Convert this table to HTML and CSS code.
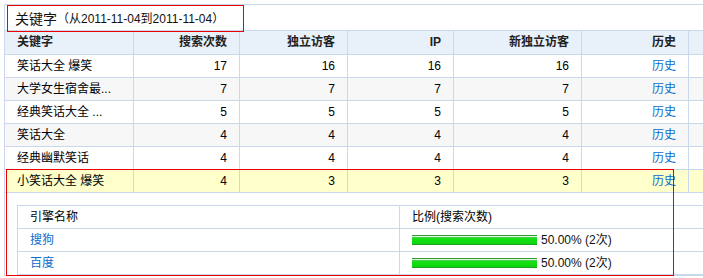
FILE: index.html
```html
<!DOCTYPE html>
<html lang="zh-CN">
<head>
<meta charset="utf-8">
<title>关键字</title>
<link rel="stylesheet" href="styles.css">
</head>
<body>
<div class="panel">
  <div class="title"><span class="title-main">关键字</span><span class="title-range">（从2011-11-04到2011-11-04）</span></div>
  <table class="grid">
    <colgroup>
      <col class="c1"><col class="c2"><col class="c3"><col class="c4"><col class="c5"><col class="c6"><col class="c7">
    </colgroup>
    <thead>
      <tr><th class="left">关键字</th><th>搜索次数</th><th>独立访客</th><th>IP</th><th>新独立访客</th><th>历史</th><th class="tail"></th></tr>
    </thead>
    <tbody>
      <tr><td class="left">笑话大全 爆笑</td><td>17</td><td>16</td><td>16</td><td>16</td><td><a href="#">历史</a></td><td class="tail"></td></tr>
      <tr class="alt"><td class="left">大学女生宿舍最...</td><td>7</td><td>7</td><td>7</td><td>7</td><td><a href="#">历史</a></td><td class="tail"></td></tr>
      <tr><td class="left">经典笑话大全 ...</td><td>5</td><td>5</td><td>5</td><td>5</td><td><a href="#">历史</a></td><td class="tail"></td></tr>
      <tr class="alt"><td class="left">笑话大全</td><td>4</td><td>4</td><td>4</td><td>4</td><td><a href="#">历史</a></td><td class="tail"></td></tr>
      <tr><td class="left">经典幽默笑话</td><td>4</td><td>4</td><td>4</td><td>4</td><td><a href="#">历史</a></td><td class="tail"></td></tr>
      <tr class="sel"><td class="left">小笑话大全 爆笑</td><td>4</td><td>3</td><td>3</td><td>3</td><td><a href="#">历史</a></td><td class="tail"></td></tr>
      <tr class="detail">
        <td colspan="7">
          <table class="engines">
            <colgroup><col class="e1"><col class="e2"></colgroup>
            <tr><td>引擎名称</td><td class="ratio">比例(搜索次数)</td></tr>
            <tr><td><a href="#">搜狗</a></td><td class="ratio"><span class="bar" style="width:125px"></span><span class="pct">50.00% (2次)</span></td></tr>
            <tr><td><a href="#">百度</a></td><td class="ratio"><span class="bar" style="width:125px"></span><span class="pct">50.00% (2次)</span></td></tr>
          </table>
        </td>
      </tr>
    </tbody>
  </table>
  <div class="hl hl-title"></div>
  <div class="hl hl-row"></div>
</div>
</body>
</html>
```
FILE: styles.css
```css
html, body {
  margin: 0;
  padding: 0;
  background: #fff;
  overflow: hidden;
}
body {
  font-family: "Liberation Sans", "Noto Sans CJK SC", sans-serif;
  font-size: 12px;
  color: #000;
}
a {
  color: #0a6ccc;
  text-decoration: none;
}
.panel {
  position: relative;
  margin: 4px 0 0 4px;
  width: 698px;
  overflow: hidden;
  border-left: 1px solid #cad8ec;
  border-top: 1px solid #cad8ec;
}
.title {
  height: 25px;
  display: flex;
  align-items: center;
  padding-left: 10px;
  color: #111;
}
.title-main {
  font-size: 14px;
}
.title-range {
  font-size: 12px;
}
.grid {
  border-collapse: separate;
  border-spacing: 0;
  table-layout: fixed;
  width: 698px;
}
.grid .c1 { width: 129px; }
.grid .c2 { width: 106px; }
.grid .c3 { width: 108px; }
.grid .c4 { width: 106px; }
.grid .c5 { width: 128px; }
.grid .c6 { width: 107px; }
.grid .c7 { width: 14px; }
.grid th,
.grid td {
  border-right: 1px solid #cad8ec;
  border-bottom: 1px solid #cad8ec;
  padding: 0 12px;
  text-align: right;
  white-space: nowrap;
  overflow: hidden;
}
.grid .tail {
  border-right: none;
  padding: 0;
}
.grid th {
  height: 23px;
  line-height: 23px;
  border-top: 1px solid #cad8ec;
  background: #e8f0fa;
  font-weight: bold;
  color: #222;
}
.grid td {
  height: 22px;
  line-height: 22px;
}
.grid .left {
  text-align: left;
}
.grid tr.alt td {
  background: #f7f7f7;
}
.grid tr.sel td {
  background: #ffffcc;
}
.grid tr.detail > td {
  padding: 12px 0 0 12px;
  border-right: none;
  text-align: left;
  height: auto;
  line-height: normal;
}
.engines {
  border-collapse: separate;
  border-spacing: 0;
  table-layout: fixed;
  width: 686px;
  border-left: 1px solid #cad8ec;
  border-top: 1px solid #cad8ec;
}
.engines .e1 { width: 382px; }
.engines .e2 { width: 304px; }
.grid .engines td {
  height: 22px;
  line-height: 22px;
  padding: 0 12px;
  border-right: 1px solid #cad8ec;
  border-bottom: 1px solid #cad8ec;
  text-align: left;
  white-space: nowrap;
  overflow: hidden;
}
.grid .engines td.ratio {
  border-right: none;
}
.bar {
  display: inline-block;
  height: 10px;
  vertical-align: -1px;
  background: linear-gradient(to bottom,
    #2f9a2f 0, #2f9a2f 1px,
    #e2f6e2 1px, #e2f6e2 2px,
    #4ccc4c 2px, #4ccc4c 3px,
    #16e016 3px, #0ed60e 9px,
    #1f9f1f 9px, #1f9f1f 10px);
}
.pct {
  margin-left: 4px;
  color: #111;
}
.hl {
  position: absolute;
  border: 1px solid #ee0000;
  pointer-events: none;
}
.hl-title {
  left: 2px;
  top: 0;
  width: 235px;
  height: 25px;
}
.hl-row {
  left: 1px;
  top: 164px;
  width: 666px;
  height: 105px;
}
```
